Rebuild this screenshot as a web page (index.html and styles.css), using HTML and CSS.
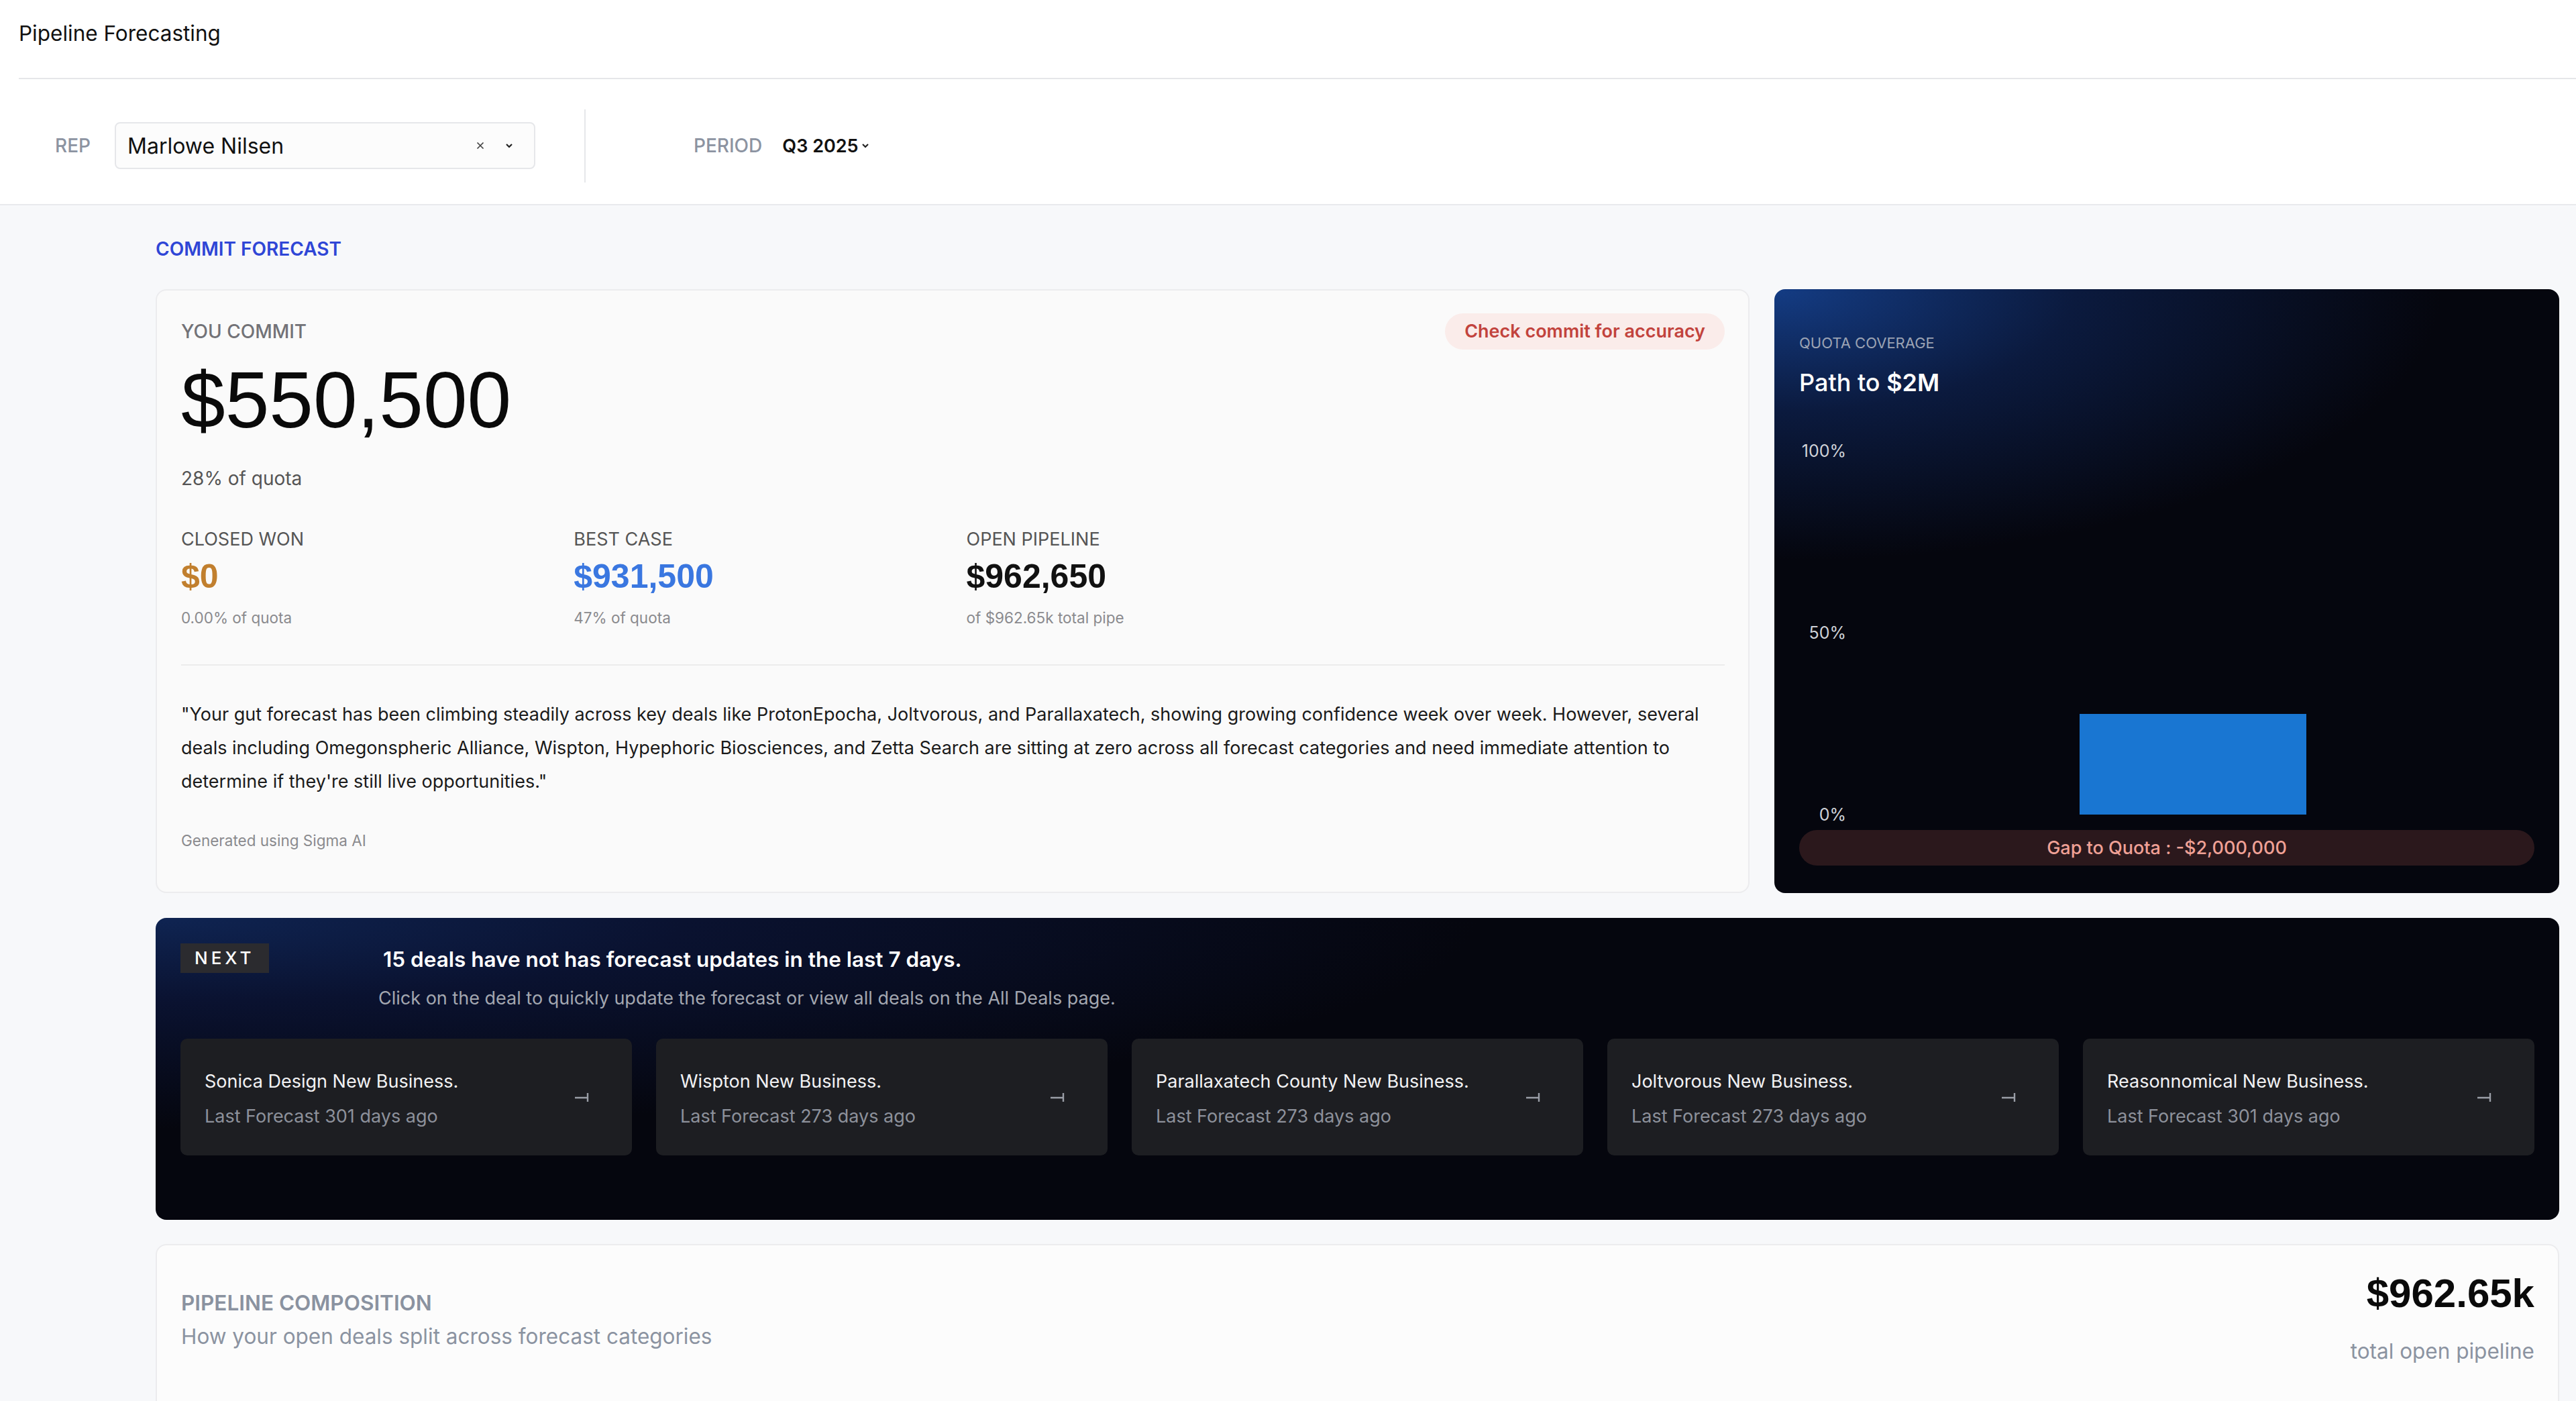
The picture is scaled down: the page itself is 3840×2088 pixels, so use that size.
FILE: index.html
```html
<!DOCTYPE html>
<html lang="en">
<head>
    <meta charset="UTF-8">
    <meta name="viewport" content="width=device-width, initial-scale=1.0">
    <title>Pipeline Forecasting</title>
    <link rel="stylesheet" href="styles.css">
</head>
<body>
    <header class="page-header">
        <h1>Pipeline Forecasting</h1>
    </header>

    <!-- Filters: rep picker + period -->
    <div class="filters">
        <div class="filter">
            <span class="filter-label">REP</span>
            <div class="select">
                <span class="select-value">Marlowe Nilsen</span>
                <svg class="select-clear" width="16" height="16" viewBox="0 0 16 16"><path d="M3.5 3.5 L12.5 12.5 M12.5 3.5 L3.5 12.5" stroke="#444" stroke-width="1.7" fill="none"/></svg>
                <svg class="chevron" width="16" height="12" viewBox="0 0 16 12"><path d="M4 4 L8 8 L12 4" stroke="#222" stroke-width="2.2" fill="none"/></svg>
            </div>
        </div>
        <div class="filter-divider"></div>
        <div class="filter filter-period">
            <span class="filter-label">PERIOD</span>
            <button class="period-btn">Q3 2025
                <svg class="chevron" width="16" height="12" viewBox="0 0 16 12"><path d="M4 4 L8 8 L12 4" stroke="#222" stroke-width="2.2" fill="none"/></svg>
            </button>
        </div>
    </div>

    <main class="content">
        <div class="section-label">COMMIT FORECAST</div>

        <div class="commit-grid">
            <!-- Commit summary -->
            <section class="card commit-card">
                <div class="commit-top">
                    <span class="muted-label">YOU COMMIT</span>
                    <span class="warn-pill">Check commit for accuracy</span>
                </div>
                <div class="commit-value">$550,500</div>
                <div class="commit-sub">28% of quota</div>

                <div class="stats">
                    <div class="stat">
                        <div class="stat-label">CLOSED WON</div>
                        <div class="stat-value won">$0</div>
                        <div class="stat-sub">0.00% of quota</div>
                    </div>
                    <div class="stat">
                        <div class="stat-label">BEST CASE</div>
                        <div class="stat-value best">$931,500</div>
                        <div class="stat-sub">47% of quota</div>
                    </div>
                    <div class="stat">
                        <div class="stat-label">OPEN PIPELINE</div>
                        <div class="stat-value">$962,650</div>
                        <div class="stat-sub">of $962.65k total pipe</div>
                    </div>
                </div>

                <p class="summary">"Your gut forecast has been climbing steadily across key deals like ProtonEpocha, Joltvorous, and Parallaxatech, showing growing confidence week over week. However, several deals including Omegonspheric Alliance, Wispton, Hypephoric Biosciences, and Zetta Search are sitting at zero across all forecast categories and need immediate attention to determine if they're still live opportunities."</p>
                <div class="generated">Generated using Sigma AI</div>
            </section>

            <!-- Quota coverage chart -->
            <section class="coverage-card">
                <div class="coverage-label">QUOTA COVERAGE</div>
                <div class="coverage-title">Path to <strong>$2M</strong></div>
                <div class="chart">
                    <div class="axis">
                        <span>100%</span>
                        <span>50%</span>
                        <span>0%</span>
                    </div>
                    <div class="plot">
                        <div class="bar" style="height: 27.6%"></div>
                    </div>
                </div>
                <div class="gap-pill">Gap to Quota : -$2,000,000</div>
            </section>
        </div>

        <!-- Deals needing a forecast update -->
        <section class="next-panel">
            <div class="next-head">
                <div class="next-badge-col"><span class="next-badge">NEXT</span></div>
                <div class="next-text">
                    <div class="next-title">15 deals have not has forecast updates in the last 7 days.</div>
                    <div class="next-sub">Click on the deal to quickly update the forecast or view all deals on the All Deals page.</div>
                </div>
            </div>
            <div class="deal-row">
                <div class="deal">
                    <div class="deal-text">
                        <div class="deal-name">Sonica Design New Business.</div>
                        <div class="deal-meta">Last Forecast 301 days ago</div>
                    </div>
                    <svg class="deal-arrow" width="22" height="16" viewBox="0 0 22 16"><path d="M1 9 H19 M20 2 V15" stroke="#9a9ea7" stroke-width="2.4" fill="none"/></svg>
                </div>
                <div class="deal">
                    <div class="deal-text">
                        <div class="deal-name">Wispton New Business.</div>
                        <div class="deal-meta">Last Forecast 273 days ago</div>
                    </div>
                    <svg class="deal-arrow" width="22" height="16" viewBox="0 0 22 16"><path d="M1 9 H19 M20 2 V15" stroke="#9a9ea7" stroke-width="2.4" fill="none"/></svg>
                </div>
                <div class="deal">
                    <div class="deal-text">
                        <div class="deal-name">Parallaxatech County New Business.</div>
                        <div class="deal-meta">Last Forecast 273 days ago</div>
                    </div>
                    <svg class="deal-arrow" width="22" height="16" viewBox="0 0 22 16"><path d="M1 9 H19 M20 2 V15" stroke="#9a9ea7" stroke-width="2.4" fill="none"/></svg>
                </div>
                <div class="deal">
                    <div class="deal-text">
                        <div class="deal-name">Joltvorous New Business.</div>
                        <div class="deal-meta">Last Forecast 273 days ago</div>
                    </div>
                    <svg class="deal-arrow" width="22" height="16" viewBox="0 0 22 16"><path d="M1 9 H19 M20 2 V15" stroke="#9a9ea7" stroke-width="2.4" fill="none"/></svg>
                </div>
                <div class="deal">
                    <div class="deal-text">
                        <div class="deal-name">Reasonnomical New Business.</div>
                        <div class="deal-meta">Last Forecast 301 days ago</div>
                    </div>
                    <svg class="deal-arrow" width="22" height="16" viewBox="0 0 22 16"><path d="M1 9 H19 M20 2 V15" stroke="#9a9ea7" stroke-width="2.4" fill="none"/></svg>
                </div>
            </div>
        </section>

        <!-- Pipeline composition -->
        <section class="card composition-card">
            <div class="composition-head">
                <div>
                    <div class="composition-title">PIPELINE COMPOSITION</div>
                    <div class="composition-sub">How your open deals split across forecast categories</div>
                </div>
                <div class="composition-total">
                    <div class="total-value">$962.65k</div>
                    <div class="total-label">total open pipeline</div>
                </div>
            </div>
        </section>
    </main>
</body>
</html>
```

FILE: styles.css
```css
* {
    box-sizing: border-box;
}

body {
    margin: 0;
    font-family: Inter, "Noto Sans", sans-serif;
    color: #111;
    background: #f7f8fa;
    overflow: hidden;
}

/* ---- header ---- */

.page-header {
    background: #fff;
    padding-left: 28px;
}

.page-header h1 {
    margin: 0;
    padding: 30px 0 46px;
    font-size: 31.5px;
    line-height: 40px;
    font-weight: 400;
    border-bottom: 2px solid #e5e6e9;
}

.filters {
    height: 188px;
    background: #fff;
    border-bottom: 2px solid #e9eaed;
    display: flex;
    align-items: center;
    padding: 12px 0 0 82px;
}

.filter {
    display: flex;
    align-items: center;
}

.filter-label {
    font-size: 28px;
    font-weight: 500;
    color: #8c93a1;
    margin-right: 36px;
}

.select {
    width: 627px;
    height: 70px;
    border: 2px solid #e6e7ea;
    border-radius: 8px;
    background: #fcfcfc;
    display: flex;
    align-items: center;
    padding: 0 29px 0 17px;
}

.select-value {
    flex: 1;
    font-size: 32px;
}

.select-clear {
    margin-right: 27px;
}

.filter-divider {
    width: 2px;
    height: 109px;
    background: #e6e7ea;
    margin-left: 73px;
}

.filter-period {
    margin-left: 161px;
}

.filter-period .filter-label {
    margin-right: 30px;
}

.period-btn {
    border: none;
    background: none;
    padding: 0;
    font-family: inherit;
    font-size: 27px;
    font-weight: 600;
    color: #111;
    display: flex;
    align-items: center;
    gap: 2px;
}

/* ---- main ---- */

.content {
    padding: 48px 25px 0 232px;
}

.section-label {
    font-size: 28px;
    line-height: 34px;
    font-weight: 600;
    color: #2f46d6;
    margin-bottom: 43px;
}

.commit-grid {
    display: grid;
    grid-template-columns: 1fr 1170px;
    gap: 37px;
}

.card {
    background: #fafafa;
    border: 2px solid #ececee;
    border-radius: 16px;
}

.commit-card {
    padding: 34px 35px 61px 36px;
}

.commit-top {
    display: flex;
    justify-content: space-between;
    align-items: center;
    height: 54px;
}

.muted-label {
    font-size: 28px;
    font-weight: 500;
    color: #727277;
}

.warn-pill {
    height: 54px;
    line-height: 54px;
    padding: 0 29px;
    border-radius: 27px;
    background: #faecea;
    color: #c2433d;
    font-size: 27px;
    font-weight: 600;
}

.commit-value {
    margin-top: 17px;
    font-family: "Liberation Sans", Arial, sans-serif;
    font-size: 118px;
    line-height: 116px;
    color: #0a0a0a;
}

.commit-sub {
    margin-top: 42px;
    font-size: 28px;
    line-height: 34px;
    color: #555;
}

.stats {
    margin-top: 57px;
    display: grid;
    grid-template-columns: repeat(4, 1fr);
    gap: 40px;
    padding-bottom: 55px;
    border-bottom: 2px solid #ececec;
}

.stat-label {
    font-size: 27px;
    line-height: 34px;
    color: #555;
}

.stat-value {
    margin-top: 13px;
    font-family: "Liberation Sans", Arial, sans-serif;
    font-size: 50px;
    line-height: 50px;
    font-weight: 700;
    color: #111;
}

.stat-value.won {
    color: #c17f2e;
}

.stat-value.best {
    color: #3a77e0;
}

.stat-sub {
    margin-top: 23px;
    font-size: 22.5px;
    line-height: 28px;
    color: #8a8a8e;
}

.summary {
    margin: 48px 0 0;
    font-size: 27px;
    line-height: 50px;
    color: #1a1a1a;
}

.generated {
    margin-top: 49px;
    font-size: 22.5px;
    line-height: 28px;
    color: #8a8a8e;
}

/* ---- quota coverage ---- */

.coverage-card {
    border-radius: 16px;
    padding: 66px 37px 41px;
    color: #fff;
    background:
        radial-gradient(ellipse 85% 45% at 0% 0%, #143c84 0%, #0b1a3e 45%, rgba(6, 8, 18, 0) 100%),
        #05060e;
    display: flex;
    flex-direction: column;
}

.coverage-label {
    font-size: 22px;
    line-height: 28px;
    color: #9ba3b4;
}

.coverage-title {
    margin-top: 23px;
    font-size: 36px;
    line-height: 44px;
    font-weight: 500;
}

.coverage-title strong {
    font-weight: 600;
}

.chart {
    margin-top: 65px;
    height: 572px;
    display: flex;
}

.axis {
    width: 70px;
    display: flex;
    flex-direction: column;
    justify-content: space-between;
    align-items: flex-end;
    font-size: 25px;
    line-height: 30px;
    color: #cfd2d8;
}

.plot {
    flex: 1;
    margin: 15px 0 15px 8px;
    display: flex;
    justify-content: center;
    align-items: flex-end;
}

.bar {
    width: 338px;
    background: #1976d2;
}

.gap-pill {
    margin-top: 8px;
    height: 53px;
    line-height: 53px;
    border-radius: 27px;
    background: #2b181c;
    color: #f0a196;
    text-align: center;
    font-size: 27px;
    font-weight: 500;
}

/* ---- next panel ---- */

.next-panel {
    margin-top: 37px;
    border-radius: 16px;
    padding: 38px 37px 96px;
    background:
        radial-gradient(ellipse 55% 70% at 0% 0%, #0f2452 0%, #0a1230 40%, rgba(6, 8, 18, 0) 100%),
        #05060e;
}

.next-head {
    display: flex;
}

.next-badge-col {
    width: 295px;
}

.next-badge {
    display: inline-block;
    width: 132px;
    height: 44px;
    line-height: 44px;
    padding-left: 21px;
    background: #2b2b2f;
    color: #fff;
    font-size: 26px;
    font-weight: 500;
    letter-spacing: 5px;
}

.next-title {
    margin: 4px 0 0 7px;
    font-size: 31.5px;
    line-height: 40px;
    font-weight: 600;
    color: #fff;
}

.next-sub {
    margin-top: 21px;
    font-size: 27px;
    line-height: 34px;
    color: #a3a7b0;
}

.deal-row {
    margin-top: 43px;
    display: grid;
    grid-template-columns: repeat(5, 1fr);
    gap: 36px;
}

.deal {
    height: 174px;
    border-radius: 10px;
    background: #1d1e22;
    display: flex;
    align-items: center;
    padding: 6px 64px 0 36px;
}

.deal-text {
    flex: 1;
}

.deal-name {
    font-size: 27px;
    line-height: 36px;
    color: #f2f2f4;
}

.deal-meta {
    margin-top: 16px;
    font-size: 27px;
    line-height: 36px;
    color: #8d919b;
}

.deal-arrow {
    margin-top: -6px;
}

/* ---- composition ---- */

.composition-card {
    margin-top: 36px;
    height: 420px;
    background: #fcfcfc;
    padding: 42px 35px 0 36px;
}

.composition-head {
    display: flex;
    justify-content: space-between;
    align-items: flex-start;
}

.composition-title {
    margin-top: 26px;
    font-size: 31.5px;
    line-height: 36px;
    font-weight: 600;
    color: #8a92a0;
}

.composition-sub {
    margin-top: 14px;
    font-size: 31.5px;
    line-height: 36px;
    color: #8b93a1;
}

.composition-total {
    text-align: right;
}

.total-value {
    font-family: "Liberation Sans", Arial, sans-serif;
    font-size: 60px;
    line-height: 60px;
    font-weight: 700;
    color: #0a0a0a;
}

.total-label {
    margin-top: 38px;
    font-size: 31.5px;
    line-height: 36px;
    color: #8b93a1;
}
```
